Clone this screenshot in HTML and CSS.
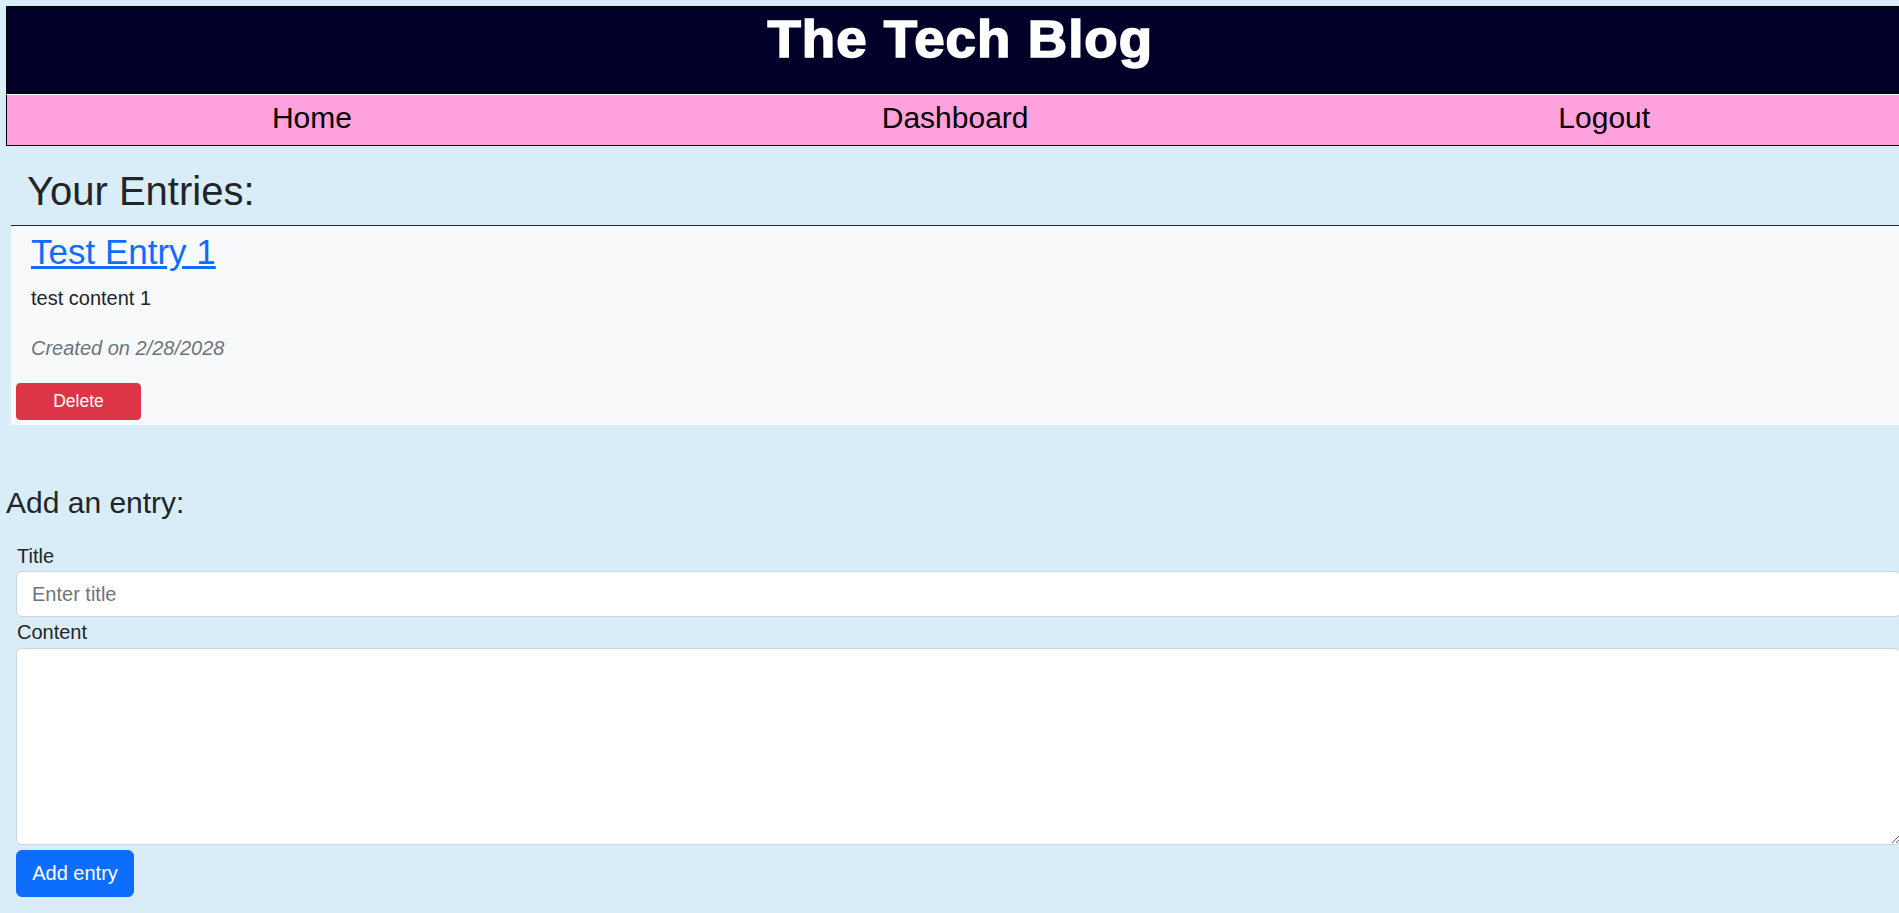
FILE: index.html
```html
<!DOCTYPE html>
<html lang="en">
<head>
<meta charset="utf-8">
<title>The Tech Blog</title>
<link rel="stylesheet" href="styles.css">
</head>
<body>
<div class="site">
  <header class="masthead">
    <h1 class="brand"><span class="brand-text">The Tech Blog</span></h1>
  </header>
  <nav class="mainnav">
    <a href="#" class="navlink">Home</a>
    <a href="#" class="navlink">Dashboard</a>
    <a href="#" class="navlink">Logout</a>
  </nav>

  <section class="entries">
    <h2 class="entries-title">Your Entries:</h2>
    <article class="entry-card">
      <div class="entry-body">
        <h3 class="entry-title"><a href="#">Test Entry 1</a></h3>
        <p class="entry-text">test content 1</p>
        <p class="entry-date">Created on 2/28/2028</p>
      </div>
      <button class="btn-delete" type="button">Delete</button>
    </article>
  </section>

  <section class="add-entry">
    <h4 class="add-title">Add an entry:</h4>
    <form class="entry-form">
      <label class="field-label" for="title">Title</label>
      <input class="field-input" id="title" type="text" placeholder="Enter title">
      <label class="field-label" for="content">Content</label>
      <textarea class="field-area" id="content"></textarea>
      <button class="btn-add" type="button">Add entry</button>
    </form>
  </section>
</div>
</body>
</html>
```

FILE: styles.css
```css
html, body {
  margin: 0;
  padding: 0;
}
body {
  background: #d9edf8;
  font-family: "Liberation Sans", Arial, sans-serif;
  color: #212529;
  overflow-x: hidden;
}
.site {
  padding: 6px 0 0 6px;
  width: 1909px;
}
.masthead {
  background: #000029;
  border: 1px solid #000;
  height: 86px;
}
.brand {
  margin: 0;
  padding-top: 4px;
  text-align: center;
  color: #fff;
  font-family: "Liberation Sans", Arial, sans-serif;
  font-weight: bold;
  font-size: 51px;
  line-height: 1.15;
}
.brand-text {
  display: inline-block;
  letter-spacing: 1px;
  transform: scaleX(1.07);
  -webkit-text-stroke: 1.6px #fff;
}
.mainnav {
  display: flex;
  justify-content: space-around;
  background: #ffa1dc;
  border-top: 1px solid #fff;
  border-left: 1px solid #000;
  border-bottom: 1px solid #000;
  height: 50px;
}
.navlink {
  font-size: 30px;
  line-height: 45px;
  color: #000;
  text-decoration: none;
}
.entries {
  margin-left: 5px;
  margin-top: 21px;
}
.entries-title {
  margin: 0 0 10px 0;
  padding-left: 16px;
  font-weight: normal;
  font-size: 40px;
  line-height: 48px;
}
.entry-card {
  background: #f8f9fa;
  border-top: 1px solid #212529;
  padding-bottom: 5px;
}
.entry-body {
  padding: 5px 20px 0 20px;
}
.entry-title {
  margin: 0 0 10px 0;
  font-weight: normal;
  font-size: 35px;
  line-height: 42px;
}
.entry-title a {
  color: #0d6efd;
  text-decoration: underline;
}
.entry-text {
  margin: 0 0 20px 0;
  font-size: 20px;
  line-height: 30px;
}
.entry-date {
  margin: 0 0 20px 0;
  font-size: 20px;
  line-height: 30px;
  font-style: italic;
  color: #6c757d;
}
.btn-delete {
  display: block;
  margin-left: 5px;
  width: 125px;
  height: 37px;
  background: #dc3545;
  border: 1px solid #dc3545;
  border-radius: 4px;
  color: #fff;
  font-family: "Liberation Sans", Arial, sans-serif;
  font-size: 17.5px;
  padding: 0;
}
.add-entry {
  margin-top: 60px;
}
.add-title {
  margin: 0 0 20px 0;
  font-weight: normal;
  font-size: 30px;
  line-height: 36px;
}
.entry-form {
  display: flex;
  flex-direction: column;
  align-items: flex-start;
  margin-left: 10px;
  width: 1885px;
}
.field-label {
  font-size: 20px;
  line-height: 30px;
  padding-left: 1px;
}
.field-input {
  box-sizing: border-box;
  width: 100%;
  height: 46px;
  margin: 0;
  padding: 0 15px;
  border: 1px solid #ced4da;
  border-radius: 6px;
  background: #fff;
  font-family: "Liberation Sans", Arial, sans-serif;
  font-size: 20px;
  color: #212529;
}
.field-input::placeholder {
  color: #6c757d;
}
.field-area {
  box-sizing: border-box;
  width: 100%;
  height: 197px;
  margin: 1px 0 0 0;
  padding: 7px 15px;
  border: 1px solid #ced4da;
  border-radius: 6px;
  background: #fff;
  font-family: "Liberation Sans", Arial, sans-serif;
  font-size: 20px;
}
.btn-add {
  margin-top: 5px;
  width: 118px;
  height: 47px;
  padding: 0;
  background: #0d6efd;
  border: 1px solid #0d6efd;
  border-radius: 6px;
  color: #fff;
  font-family: "Liberation Sans", Arial, sans-serif;
  font-size: 20px;
}
```
